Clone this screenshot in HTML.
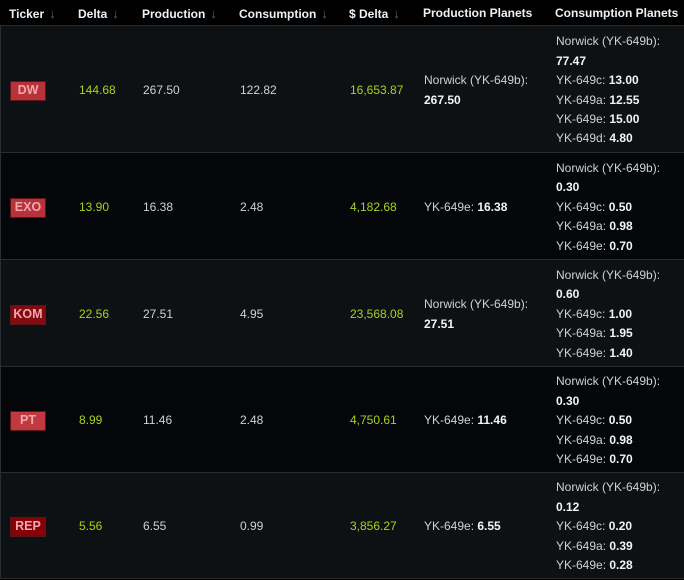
<!DOCTYPE html>
<html><head><style>
*{margin:0;padding:0;box-sizing:border-box}
body{width:684px;height:580px;background:#000;font-family:"Liberation Sans",sans-serif;font-size:12px;color:#cfd2d5;overflow:hidden;position:relative}
.h{position:absolute;top:0;left:0;width:684px;height:26px;background:#000;border-bottom:1px solid #2a2d30}
.h span{position:absolute;top:6px;font-weight:bold;color:#eef0f2;white-space:nowrap;font-size:12px}
.h i{font-style:normal;color:#5f6367;font-weight:normal;margin-left:5px;font-size:13px}
.r{position:absolute;left:0;width:684px;border-bottom:1px solid #2a2d30;border-left:1px solid #2a2d30}
.a{background:#0e1113}.b{background:#05060a}
.c{position:absolute;top:0;height:100%;padding-top:3px;display:flex;flex-direction:column;justify-content:center;line-height:19.4px;white-space:nowrap}
.g{color:#a6d320}
b{color:#f2f4f6}
.t{width:36px;height:20px;display:flex;align-items:center;justify-content:center;font-weight:bold;color:#f4a7ae;font-size:12.5px;border:1px solid #5a1518}
</style></head><body>
<div class="h">
<span style="left:9px">Ticker<i>↓</i></span>
<span style="left:78px">Delta<i>↓</i></span>
<span style="left:142px">Production<i>↓</i></span>
<span style="left:239px">Consumption<i>↓</i></span>
<span style="left:349px">$ Delta<i>↓</i></span>
<span style="left:423px">Production Planets</span>
<span style="left:555px">Consumption Planets</span>
</div>

<div class="r a" style="top:26px;height:127px">
<div class="c" style="left:9px"><div class="t" style="background:#b8323a">DW</div></div>
<div class="c g" style="left:78px">144.68</div>
<div class="c" style="left:142px">267.50</div>
<div class="c" style="left:239px">122.82</div>
<div class="c g" style="left:349px">16,653.87</div>
<div class="c" style="left:423px"><div>Norwick (YK-649b):</div><div><b>267.50</b></div></div>
<div class="c" style="left:555px"><div>Norwick (YK-649b):</div><div><b>77.47</b></div><div>YK-649c: <b>13.00</b></div><div>YK-649a: <b>12.55</b></div><div>YK-649e: <b>15.00</b></div><div>YK-649d: <b>4.80</b></div></div>
</div>

<div class="r b" style="top:153px;height:107px">
<div class="c" style="left:9px"><div class="t" style="background:#b8323a">EXO</div></div>
<div class="c g" style="left:78px">13.90</div>
<div class="c" style="left:142px">16.38</div>
<div class="c" style="left:239px">2.48</div>
<div class="c g" style="left:349px">4,182.68</div>
<div class="c" style="left:423px"><div>YK-649e: <b>16.38</b></div></div>
<div class="c" style="left:555px"><div>Norwick (YK-649b):</div><div><b>0.30</b></div><div>YK-649c: <b>0.50</b></div><div>YK-649a: <b>0.98</b></div><div>YK-649e: <b>0.70</b></div></div>
</div>

<div class="r a" style="top:260px;height:107px">
<div class="c" style="left:9px"><div class="t" style="background:#820a10">KOM</div></div>
<div class="c g" style="left:78px">22.56</div>
<div class="c" style="left:142px">27.51</div>
<div class="c" style="left:239px">4.95</div>
<div class="c g" style="left:349px">23,568.08</div>
<div class="c" style="left:423px"><div>Norwick (YK-649b):</div><div><b>27.51</b></div></div>
<div class="c" style="left:555px"><div>Norwick (YK-649b):</div><div><b>0.60</b></div><div>YK-649c: <b>1.00</b></div><div>YK-649a: <b>1.95</b></div><div>YK-649e: <b>1.40</b></div></div>
</div>

<div class="r b" style="top:367px;height:106px">
<div class="c" style="left:9px"><div class="t" style="background:#c0393f">PT</div></div>
<div class="c g" style="left:78px">8.99</div>
<div class="c" style="left:142px">11.46</div>
<div class="c" style="left:239px">2.48</div>
<div class="c g" style="left:349px">4,750.61</div>
<div class="c" style="left:423px"><div>YK-649e: <b>11.46</b></div></div>
<div class="c" style="left:555px"><div>Norwick (YK-649b):</div><div><b>0.30</b></div><div>YK-649c: <b>0.50</b></div><div>YK-649a: <b>0.98</b></div><div>YK-649e: <b>0.70</b></div></div>
</div>

<div class="r a" style="top:473px;height:106px">
<div class="c" style="left:9px"><div class="t" style="background:#860008">REP</div></div>
<div class="c g" style="left:78px">5.56</div>
<div class="c" style="left:142px">6.55</div>
<div class="c" style="left:239px">0.99</div>
<div class="c g" style="left:349px">3,856.27</div>
<div class="c" style="left:423px"><div>YK-649e: <b>6.55</b></div></div>
<div class="c" style="left:555px"><div>Norwick (YK-649b):</div><div><b>0.12</b></div><div>YK-649c: <b>0.20</b></div><div>YK-649a: <b>0.39</b></div><div>YK-649e: <b>0.28</b></div></div>
</div>
</body></html>
